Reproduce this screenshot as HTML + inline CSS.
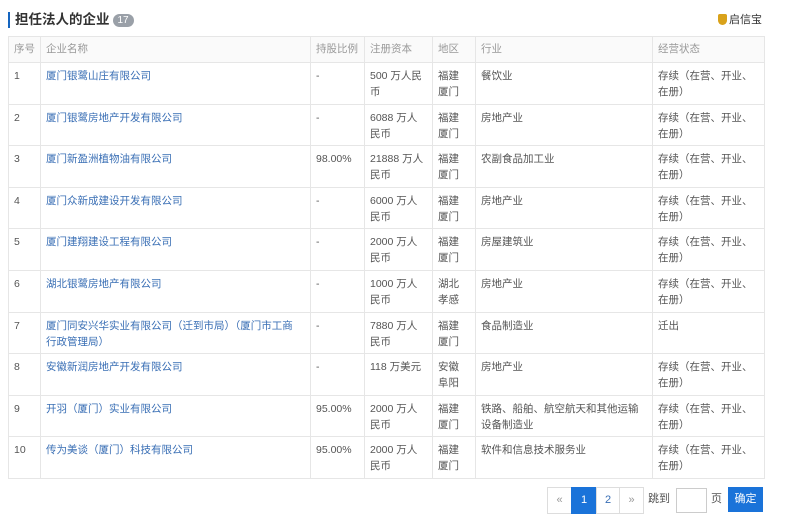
<!DOCTYPE html><html><head><meta charset="utf-8"><style>
body{margin:0;width:800px;height:514px;background:#fff;font-family:"Liberation Sans","Noto Sans CJK SC",sans-serif;position:relative;overflow:hidden;color:#555;font-size:10.5px}
.title{position:absolute;left:8px;top:12px;height:16px;border-left:2px solid #1565c0;padding-left:5px;font-size:13.5px;font-weight:bold;color:#333;line-height:16px}
.badge{display:inline-block;background:#9aa0a8;color:#fff;border-radius:8px;font-size:10px;padding:0 5px;line-height:13px;font-weight:normal;vertical-align:1px;margin-left:3px}
.logo{position:absolute;left:718px;top:13px;font-size:11px;color:#333;line-height:14px}
.logo i{display:inline-block;width:9px;height:11px;background:#d9a21a;border-radius:2px 2px 5px 5px;vertical-align:-2px;margin-right:2px}
table{position:absolute;left:8px;top:36px;width:756px;border-collapse:collapse;table-layout:fixed}
td,th{border:1px solid #e6e6e6;vertical-align:top;padding:0 5px;line-height:16px;font-weight:normal;text-align:left;overflow:hidden}
th{height:25px;line-height:25px;color:#999;background:#fafafa;white-space:nowrap}
td{height:40.6px;padding-top:5px;box-sizing:border-box}
tr{height:41.6px}
a{color:#3a6fb5;text-decoration:none}
.pg{position:absolute;top:487px;height:25px;line-height:25px;text-align:center;font-size:11px}
</style></head><body>
<div class="title">担任法人的企业<span class="badge">17</span></div>
<div class="logo"><i></i>启信宝</div>
<table>
<colgroup><col style="width:32px"><col style="width:270px"><col style="width:54px"><col style="width:68px"><col style="width:43px"><col style="width:177px"><col style="width:112px"></colgroup>
<tr style="height:26px"><th>序号</th><th>企业名称</th><th>持股比例</th><th>注册资本</th><th>地区</th><th>行业</th><th>经营状态</th></tr>
<tr><td>1</td><td><a>厦门银鹭山庄有限公司</a></td><td>-</td><td>500 万人民币</td><td>福建<br>厦门</td><td>餐饮业</td><td>存续（在营、开业、在册）</td></tr>
<tr><td>2</td><td><a>厦门银鹭房地产开发有限公司</a></td><td>-</td><td>6088 万人民币</td><td>福建<br>厦门</td><td>房地产业</td><td>存续（在营、开业、在册）</td></tr>
<tr><td>3</td><td><a>厦门新盈洲植物油有限公司</a></td><td>98.00%</td><td>21888 万人民币</td><td>福建<br>厦门</td><td>农副食品加工业</td><td>存续（在营、开业、在册）</td></tr>
<tr><td>4</td><td><a>厦门众新成建设开发有限公司</a></td><td>-</td><td>6000 万人民币</td><td>福建<br>厦门</td><td>房地产业</td><td>存续（在营、开业、在册）</td></tr>
<tr><td>5</td><td><a>厦门建翔建设工程有限公司</a></td><td>-</td><td>2000 万人民币</td><td>福建<br>厦门</td><td>房屋建筑业</td><td>存续（在营、开业、在册）</td></tr>
<tr><td>6</td><td><a>湖北银鹭房地产有限公司</a></td><td>-</td><td>1000 万人民币</td><td>湖北<br>孝感</td><td>房地产业</td><td>存续（在营、开业、在册）</td></tr>
<tr><td>7</td><td><a>厦门同安兴华实业有限公司（迁到市局）（厦门市工商<br>行政管理局）</a></td><td>-</td><td>7880 万人民币</td><td>福建<br>厦门</td><td>食品制造业</td><td>迁出</td></tr>
<tr><td>8</td><td><a>安徽新润房地产开发有限公司</a></td><td>-</td><td>118 万美元</td><td>安徽<br>阜阳</td><td>房地产业</td><td>存续（在营、开业、在册）</td></tr>
<tr><td>9</td><td><a>开羽（厦门）实业有限公司</a></td><td>95.00%</td><td>2000 万人民币</td><td>福建<br>厦门</td><td>铁路、船舶、航空航天和其他运输设备制造业</td><td>存续（在营、开业、在册）</td></tr>
<tr><td>10</td><td><a>传为美谈（厦门）科技有限公司</a></td><td>95.00%</td><td>2000 万人民币</td><td>福建<br>厦门</td><td>软件和信息技术服务业</td><td>存续（在营、开业、在册）</td></tr>
</table>
<div class="pg" style="left:547px;width:23px;border:1px solid #ddd;color:#999">«</div>
<div class="pg" style="left:571px;width:24px;background:#1a73d9;color:#fff;border:1px solid #1a73d9">1</div>
<div class="pg" style="left:596px;width:22px;border:1px solid #ddd;color:#3a6fb5">2</div>
<div class="pg" style="left:619px;width:23px;border:1px solid #ddd;color:#999">»</div>
<div class="pg" style="left:648px;color:#555">跳到</div>
<div class="pg" style="left:676px;width:29px;height:23px;border:1px solid #ccc;top:488px"></div>
<div class="pg" style="left:711px;color:#555">页</div>
<div class="pg" style="left:728px;width:35px;background:#1a73d9;color:#fff">确定</div>
</body></html>
